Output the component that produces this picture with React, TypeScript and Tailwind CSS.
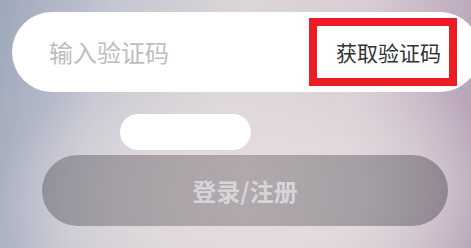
import React from 'react';

const cjk = "font-['Noto_Sans_CJK_SC','Noto_Sans',sans-serif]";

export default function App() {
  return (
    <div
      className={`relative h-[248px] w-full overflow-hidden ${cjk} bg-[radial-gradient(ellipse_55%_60%_at_55%_78%,#e6dde1_0%,#e1d9dd_40%,rgba(225,217,221,0)_100%),linear-gradient(100deg,#9ea8ba_0%,#c4c6d2_22%,#dcd6d8_48%,#d8ccd4_72%,#b09cb2_100%)]`}
    >
      <div className="pt-3 pl-3">
        {/* code input */}
        <div className="flex h-20 w-[468px] items-center rounded-full bg-white">
          <span className="pl-[37px] text-[24px] leading-none text-[#bdbdbd]">输入验证码</span>
          <div className="ml-auto mr-[23px] flex h-[68px] w-[148px] items-center border-[8px] border-[#ed1c24] pl-[19px]">
            <span className="text-[21px] leading-none text-[#333333]">获取验证码</span>
          </div>
        </div>

        <div className="mt-[22px] ml-[108px] h-9 w-[131px] rounded-full bg-white" />

        <button className="mt-[5px] ml-[30px] flex h-[71px] w-[406px] items-center justify-center rounded-full bg-[linear-gradient(90deg,rgba(40,36,48,0.32),rgba(40,34,40,0.28)_50%,rgba(30,28,40,0.34))]">
          <span className="text-[24px] font-bold leading-none text-[#d6d4d7]">登录/注册</span>
        </button>
      </div>
    </div>
  );
}
